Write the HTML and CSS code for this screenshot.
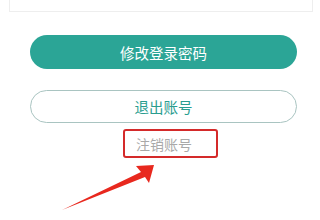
FILE: index.html
```html
<!DOCTYPE html>
<html lang="zh">
<head>
<meta charset="utf-8">
<link rel="stylesheet" href="styles.css">
</head>
<body>
<div class="card"></div>
<div class="actions">
  <button class="btn btn-primary">修改登录密码</button>
  <button class="btn btn-outline">退出账号</button>
  <div class="cancel-row">
    <span class="cancel-box">注销账号</span>
  </div>
</div>
<svg class="arrow" width="320" height="220" viewBox="0 0 320 220">
  <polygon points="154,165 136,166 141,172 62,210 145,177 149,183" fill="#e8281e"/>
</svg>
</body>
</html>
```
FILE: styles.css
```css
html, body {
  margin: 0;
  padding: 0;
  background: #ffffff;
}
body {
  width: 320px;
  height: 220px;
  overflow: hidden;
  position: relative;
  font-family: "Noto Sans CJK SC", "Noto Sans", sans-serif;
}
.card {
  height: 11px;
  margin: 0 7px 0 9px;
  border: 1px solid #eeeeee;
  border-top: none;
}
.actions {
  display: flex;
  flex-direction: column;
  padding: 23px 23px 0 30px;
}
.btn {
  width: 267px;
  border-radius: 17px;
  font-family: "Noto Sans CJK SC", sans-serif;
  font-size: 14.5px;
  font-weight: 400;
  padding: 0;
  display: flex;
  align-items: center;
  justify-content: center;
}
.btn-primary {
  height: 34px;
  background: #2ba596;
  border: none;
  color: #ffffff;
}
.btn-outline {
  margin-top: 21px;
  height: 33px;
  background: #ffffff;
  border: 1px solid #a9c4c1;
  color: #2a9d8f;
}
.cancel-row {
  display: flex;
  margin-top: 6px;
  padding-left: 93px;
}
.cancel-box {
  width: 95px;
  height: 29px;
  box-sizing: border-box;
  border: 2px solid #d42a2a;
  border-radius: 3px;
  padding-left: 11px;
  display: flex;
  align-items: center;
  font-size: 14px;
  color: #a9a9a9;
}
.arrow {
  position: absolute;
  left: 0;
  top: 0;
}
```
